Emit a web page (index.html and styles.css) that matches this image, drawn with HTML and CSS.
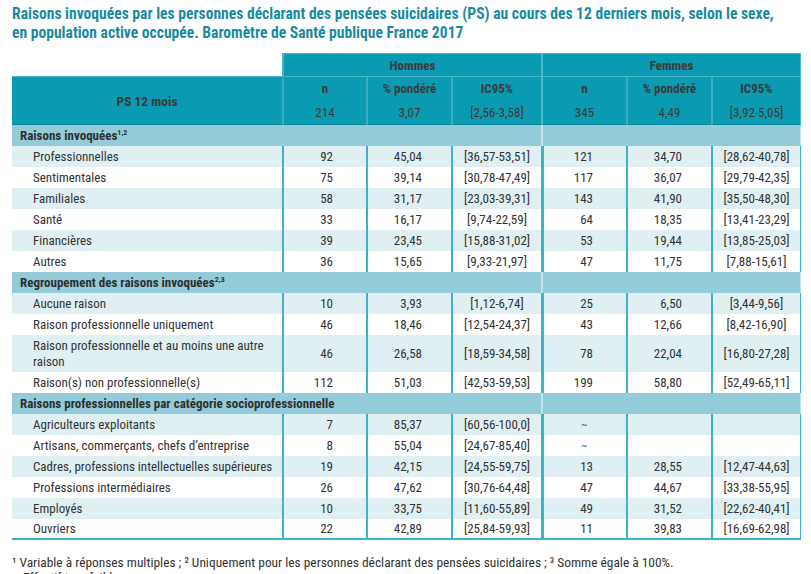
FILE: index.html
```html
<!DOCTYPE html>
<html lang="fr">
<head>
<meta charset="utf-8">
<title>Raisons invoquées – PS 12 mois</title>
<link rel="stylesheet" href="styles.css">
</head>
<body>
<div class="page">
  <h1 class="title">Raisons invoquées par les personnes déclarant des pensées suicidaires (PS) au cours des 12 derniers mois, selon le sexe,<br>en population active occupée. Baromètre de Santé publique France 2017</h1>
  <table class="data">
    <colgroup>
      <col class="c-label"><col class="c-n"><col class="c-p"><col class="c-ic"><col class="c-n2"><col class="c-p"><col class="c-ic">
    </colgroup>
    <thead>
      <tr class="h-sex">
        <th class="blank"></th>
        <th colspan="3" class="sex">Hommes</th>
        <th colspan="3" class="sex sex-f">Femmes</th>
      </tr>
      <tr class="h-cols">
        <th rowspan="2" class="ps">PS 12 mois</th>
        <th class="hc">n</th><th class="hc">% pondéré</th><th class="hc">IC95%</th>
        <th class="hc f1">n</th><th class="hc">% pondéré</th><th class="hc">IC95%</th>
      </tr>
      <tr class="h-vals">
        <td class="hv">214</td><td class="hv">3,07</td><td class="hv">[2,56-3,58]</td>
        <td class="hv f1">345</td><td class="hv">4,49</td><td class="hv">[3,92-5,05]</td>
      </tr>
    </thead>
    <tbody>
      <tr class="sec"><td colspan="4">Raisons invoquées<sup>1,2</sup></td><td colspan="3" class="f1"></td></tr>
      <tr class="odd"><td class="lab">Professionnelles</td><td class="n">92</td><td class="p">45,04</td><td class="ic">[36,57-53,51]</td><td class="n f1">121</td><td class="p">34,70</td><td class="ic">[28,62-40,78]</td></tr>
      <tr><td class="lab">Sentimentales</td><td class="n">75</td><td class="p">39,14</td><td class="ic">[30,78-47,49]</td><td class="n f1">117</td><td class="p">36,07</td><td class="ic">[29,79-42,35]</td></tr>
      <tr class="odd"><td class="lab">Familiales</td><td class="n">58</td><td class="p">31,17</td><td class="ic">[23,03-39,31]</td><td class="n f1">143</td><td class="p">41,90</td><td class="ic">[35,50-48,30]</td></tr>
      <tr><td class="lab">Santé</td><td class="n">33</td><td class="p">16,17</td><td class="ic">[9,74-22,59]</td><td class="n f1">64</td><td class="p">18,35</td><td class="ic">[13,41-23,29]</td></tr>
      <tr class="odd"><td class="lab">Financières</td><td class="n">39</td><td class="p">23,45</td><td class="ic">[15,88-31,02]</td><td class="n f1">53</td><td class="p">19,44</td><td class="ic">[13,85-25,03]</td></tr>
      <tr><td class="lab">Autres</td><td class="n">36</td><td class="p">15,65</td><td class="ic">[9,33-21,97]</td><td class="n f1">47</td><td class="p">11,75</td><td class="ic">[7,88-15,61]</td></tr>
      <tr class="sec"><td colspan="4">Regroupement des raisons invoquées<sup>2,3</sup></td><td colspan="3" class="f1"></td></tr>
      <tr class="odd"><td class="lab">Aucune raison</td><td class="n">10</td><td class="p">3,93</td><td class="ic">[1,12-6,74]</td><td class="n f1">25</td><td class="p">6,50</td><td class="ic">[3,44-9,56]</td></tr>
      <tr><td class="lab">Raison professionnelle uniquement</td><td class="n">46</td><td class="p">18,46</td><td class="ic">[12,54-24,37]</td><td class="n f1">43</td><td class="p">12,66</td><td class="ic">[8,42-16,90]</td></tr>
      <tr class="odd tall"><td class="lab">Raison professionnelle et au moins une autre raison</td><td class="n">46</td><td class="p">26,58</td><td class="ic">[18,59-34,58]</td><td class="n f1">78</td><td class="p">22,04</td><td class="ic">[16,80-27,28]</td></tr>
      <tr><td class="lab">Raison(s) non professionnelle(s)</td><td class="n">112</td><td class="p">51,03</td><td class="ic">[42,53-59,53]</td><td class="n f1">199</td><td class="p">58,80</td><td class="ic">[52,49-65,11]</td></tr>
      <tr class="sec"><td colspan="4">Raisons professionnelles par catégorie socioprofessionnelle</td><td colspan="3" class="f1"></td></tr>
      <tr class="odd"><td class="lab">Agriculteurs exploitants</td><td class="n">7</td><td class="p">85,37</td><td class="ic">[60,56-100,0]</td><td class="tilde f1">~</td><td class="p"></td><td class="ic"></td></tr>
      <tr><td class="lab">Artisans, commerçants, chefs d’entreprise</td><td class="n">8</td><td class="p">55,04</td><td class="ic">[24,67-85,40]</td><td class="tilde f1">~</td><td class="p"></td><td class="ic"></td></tr>
      <tr class="odd"><td class="lab">Cadres, professions intellectuelles supérieures</td><td class="n">19</td><td class="p">42,15</td><td class="ic">[24,55-59,75]</td><td class="n f1">13</td><td class="p">28,55</td><td class="ic">[12,47-44,63]</td></tr>
      <tr><td class="lab">Professions intermédiaires</td><td class="n">26</td><td class="p">47,62</td><td class="ic">[30,76-64,48]</td><td class="n f1">47</td><td class="p">44,67</td><td class="ic">[33,38-55,95]</td></tr>
      <tr class="odd"><td class="lab">Employés</td><td class="n">10</td><td class="p">33,75</td><td class="ic">[11,60-55,89]</td><td class="n f1">49</td><td class="p">31,52</td><td class="ic">[22,62-40,41]</td></tr>
      <tr class="last"><td class="lab">Ouvriers</td><td class="n">22</td><td class="p">42,89</td><td class="ic">[25,84-59,93]</td><td class="n f1">11</td><td class="p">39,83</td><td class="ic">[16,69-62,98]</td></tr>
    </tbody>
  </table>
  <p class="note">¹ Variable à réponses multiples ; ² Uniquement pour les personnes déclarant des pensées suicidaires ; ³ Somme égale à 100%.</p>
  <p class="note note2">~ Effectif trop faible.</p>
</div>
</body>
</html>
```
FILE: styles.css
```css
html, body {
  margin: 0;
  padding: 0;
  background: #ffffff;
}
body {
  font-family: "Liberation Sans Narrow", "Arial Narrow", "Roboto Condensed", "Liberation Sans", Arial, sans-serif;
  color: #333333;
  overflow: hidden;
}
.page {
  padding: 5px 10px 0 12px;
}
.title {
  margin: 0;
  font-size: 15.6px;
  line-height: 19px;
  font-weight: bold;
  color: #1a8b9f;
}
.data {
  margin-top: 10px;
  border-collapse: separate;
  border-spacing: 0;
  table-layout: fixed;
  width: 789px;
  font-size: 13px;
}
.c-label { width: 270px; }
.c-n { width: 84px; }
.c-n2 { width: 85px; }
.c-p { width: 85px; }
.c-ic { width: 90px; }

.data th, .data td {
  padding: 0;
  box-sizing: border-box;
  white-space: nowrap;
}
/* header */
.blank {
  background: #ffffff;
}
.sex {
  height: 23px;
  background: #0a9bb2;
  color: #3a3a3a;
  font-weight: bold;
  border-top: 1px solid #4ab7c8;
  border-left: 2px solid #4ab7c8;
  border-right: 1px solid #4ab7c8;
}
.sex-f {
  border-left: 2px solid #4ab7c8;
}
.h-sex .sex:not(.sex-f) { border-right: 0; }
.ps {
  background: #0a9bb2;
  color: #3a3a3a;
  font-weight: bold;
  font-size: 13.5px;
  border-top: 1px solid #4ab7c8;
  border-bottom: 1px solid #08889e;
  text-align: center;
}
.hc, .hv {
  background: #0a9bb2;
  color: #3a3a3a;
  text-align: center;
  border-left: 2px solid #3aaec1;
  border-top: 1px solid #4ab7c8;
}
.hc { height: 24px; font-weight: bold; vertical-align: middle; padding-top: 2px; }
.hv { height: 25px; border-top: 0; border-bottom: 1px solid #08889e; padding-bottom: 2px; }
.h-cols .hc:last-child, .h-vals .hv:last-child { border-right: 1px solid #4ab7c8; }
.hc.f1, .hv.f1 { border-left: 2px solid #4ab7c8; }

/* sections */
.sec td {
  background: #93ccd8;
  height: 21px;
  font-weight: bold;
  padding-left: 8px;
  color: #2f2f2f;
}
.sec td.f1 {
  border-left: 2px solid #c3e3ea;
  border-right: 1px solid #c3e3ea;
  padding-left: 0;
}
.sec sup {
  font-size: 8px;
  vertical-align: 5px;
  line-height: 0;
}

/* data rows */
tbody tr td {
  height: 21px;
  background: #ffffff;
}
tbody tr.odd td {
  background: #dfeff2;
}
tbody tr.tall td {
  height: 37px;
}
.lab {
  padding-left: 21px !important;
  white-space: normal !important;
  line-height: 16px;
}
.n, .p, .ic, .tilde {
  border-left: 2px solid #3cb4c7;
}
.n { text-align: right; padding-right: 33px !important; }
.p { text-align: right; padding-right: 29px !important; }
.ic { text-align: center; }
.tilde { text-align: left; padding-left: 37px !important; font-size: 11px; color: #555; }
tbody tr:not(.sec) td:last-child { border-right: 1px solid #3cb4c7; }
.n.f1, .tilde.f1 { border-left: 3px solid #3cb4c7; }
tbody tr.last td { border-bottom: 2px solid #3cb4c7; }

.note {
  margin: 15px 0 0 0;
  font-size: 13.4px;
  line-height: 15px;
  color: #333333;
}
.note2 {
  margin-top: 0;
}
```
